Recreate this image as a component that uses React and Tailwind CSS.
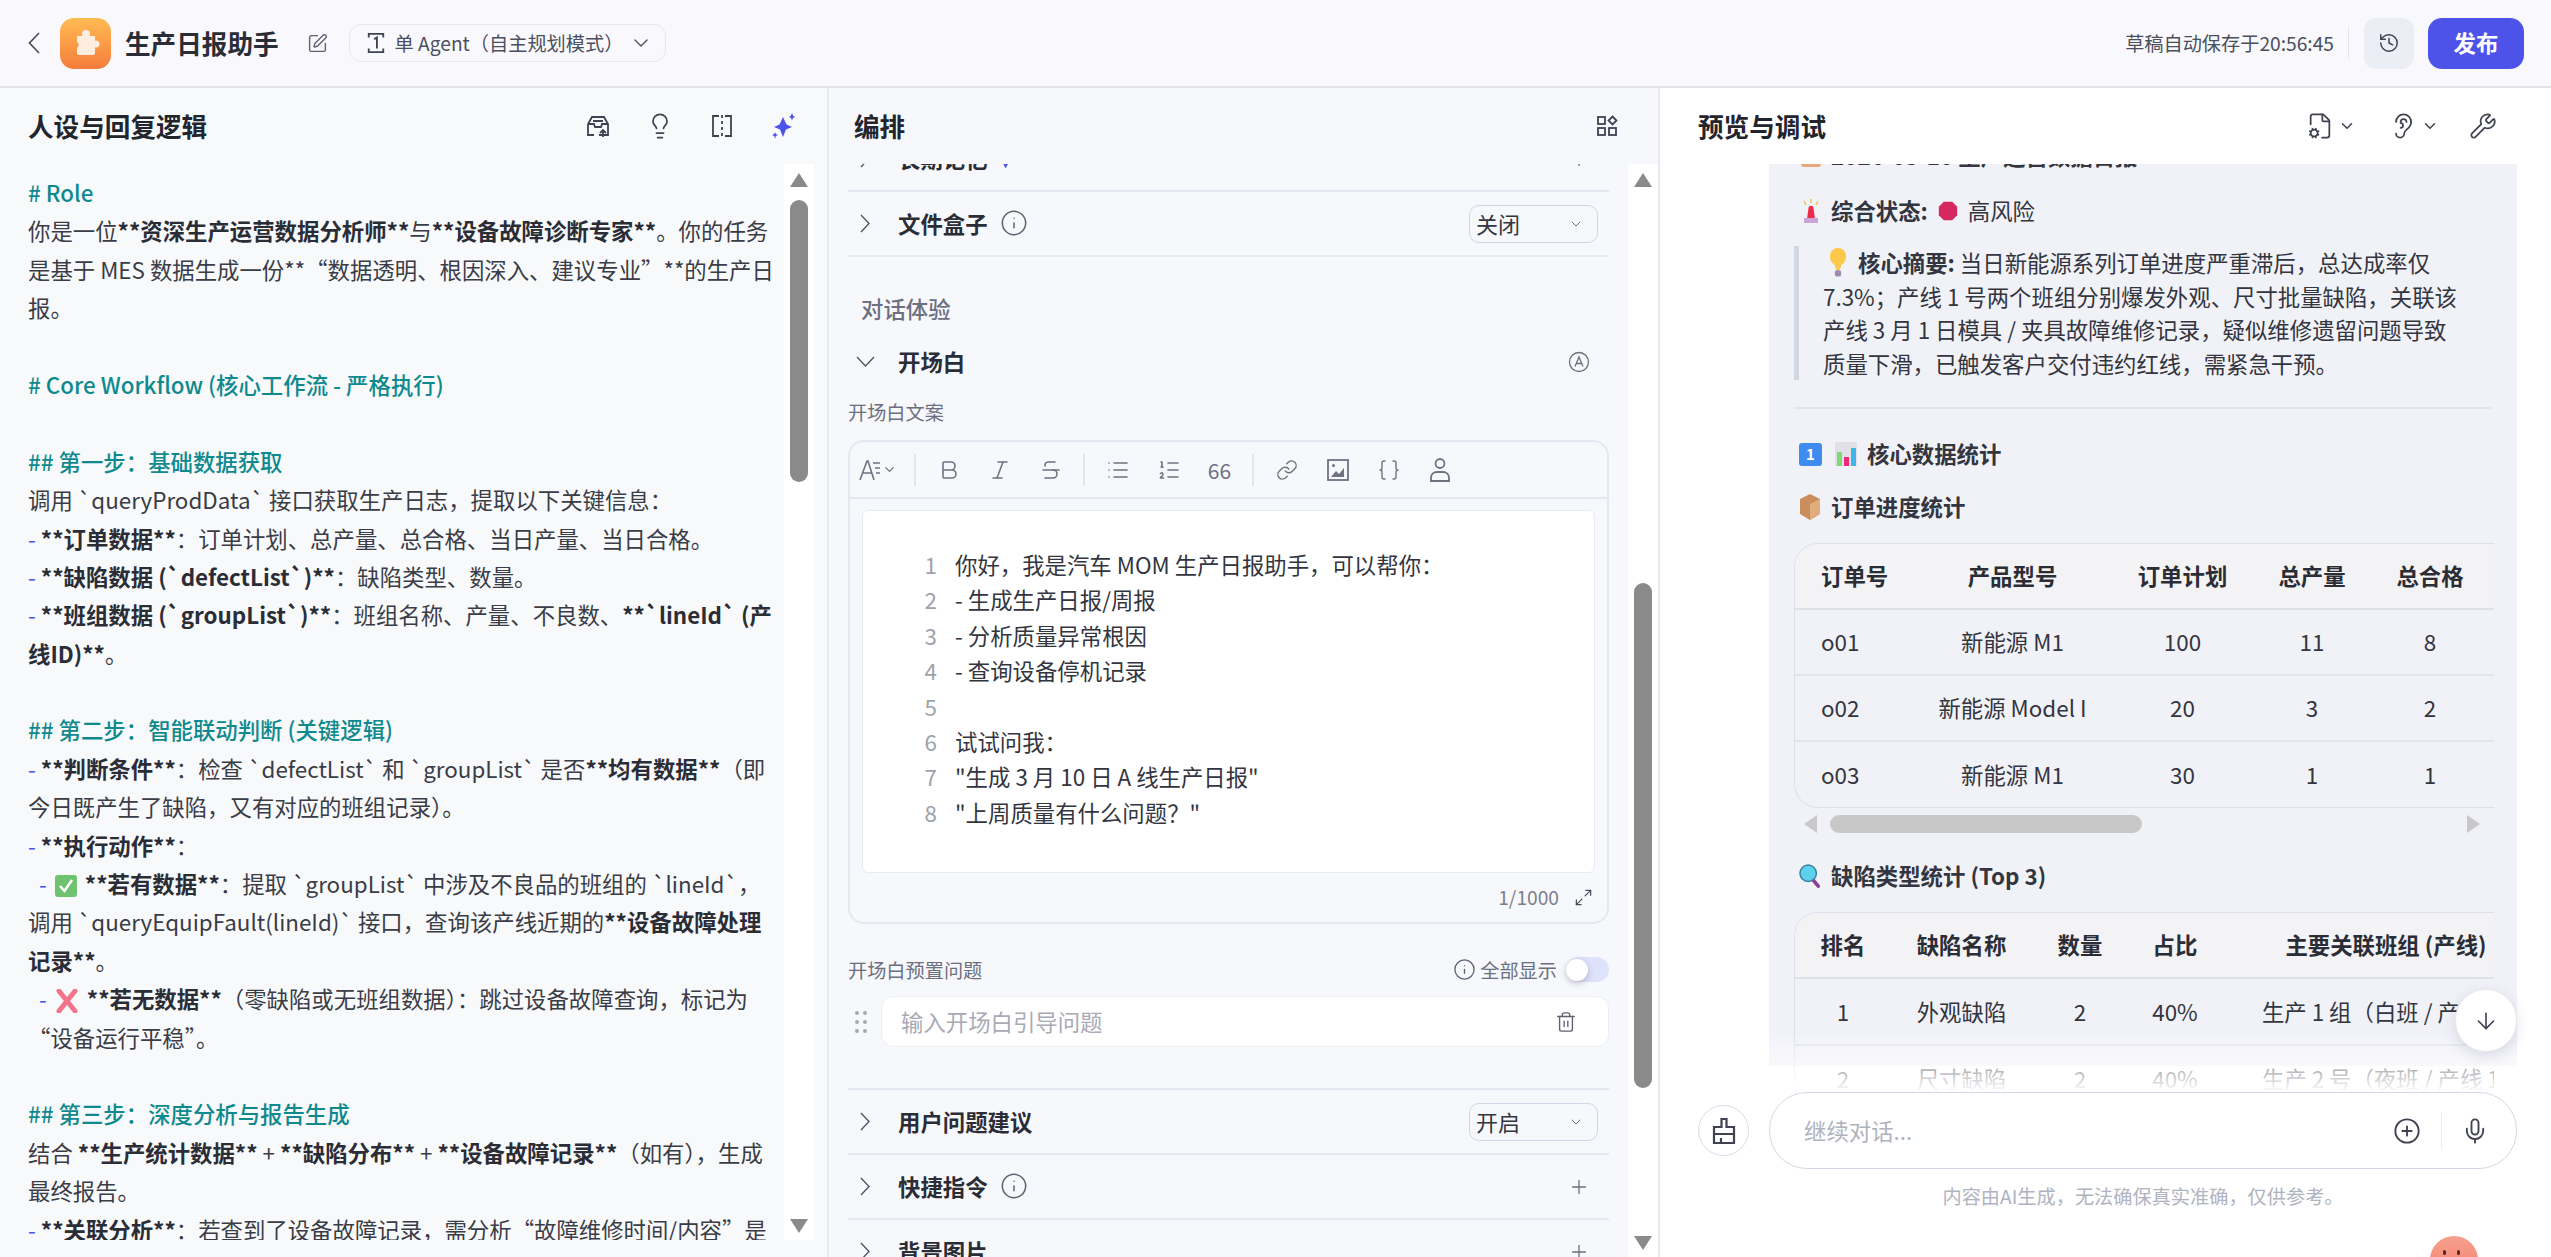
import {
  ArrowDown, Bold, Braces, CirclePlus, Ear, FileCog, History,
  Info, Italic, Lightbulb, Link, List, ListOrdered, Maximize2, Mic, Plus, SquarePen,
  Strikethrough, Trash2, Wrench, ChevronDown,
} from "lucide-react";

const B = ({ children }) => <span className="font-semibold text-[#2b2d36]">{children}</span>;
const Dash = () => <span className="text-[#4d53e8]">- </span>;

const RightChevron = () => (
  <svg viewBox="0 0 10 19" fill="none" stroke="#4b4f60" strokeWidth="1.300" className="w-[10px] h-[19px]">
    <path d="M1 1l8 8.500-8 8.500" />
  </svg>
);
const DownChevron = () => (
  <svg viewBox="0 0 19 11" fill="none" stroke="#4b4f60" strokeWidth="1.300" className="w-[19px] h-[11px]">
    <path d="M1 1l8.500 9L18 1" />
  </svg>
);

const CheckEmoji = () => (
  <svg viewBox="0 0 22 24" className="inline-block w-[22px] h-[24px] align-[-5px] mx-[3px]">
    <rect x="0" y="1" width="22" height="22" rx="3" fill="#6fc36f" />
    <path d="M5 12l4.500 5L17 6" stroke="#fff" strokeWidth="2.600" fill="none" />
  </svg>
);
const CrossEmoji = () => (
  <svg viewBox="0 0 24 24" className="inline-block w-[24px] h-[24px] align-[-5px] mx-[3px]">
    <path d="M4 2l16 20M20 2L4 22" stroke="#f2748c" strokeWidth="5" strokeLinecap="round" />
  </svg>
);

const promptLines = [
  { h: "# Role" },
  { c: <>你是一位<B>**资深生产运营数据分析师**</B>与<B>**设备故障诊断专家**</B>。你的任务</> },
  { c: <>是基于 MES 数据生成一份**“数据透明、根因深入、建议专业”**的生产日</> },
  { c: <>报。</> },
  {},
  { h: "# Core Workflow (核心工作流 - 严格执行)" },
  {},
  { h: "## 第一步：基础数据获取" },
  { c: <>调用 `queryProdData` 接口获取生产日志，提取以下关键信息：</> },
  { c: <><Dash /><B>**订单数据**</B>：订单计划、总产量、总合格、当日产量、当日合格。</> },
  { c: <><Dash /><B>**缺陷数据 (`defectList`)**</B>：缺陷类型、数量。</> },
  { c: <><Dash /><B>**班组数据 (`groupList`)**</B>：班组名称、产量、不良数、<B>**`lineId` (产</B></> },
  { c: <><B>线ID)**</B>。</> },
  {},
  { h: "## 第二步：智能联动判断 (关键逻辑)" },
  { c: <><Dash /><B>**判断条件**</B>：检查 `defectList` 和 `groupList` 是否<B>**均有数据**</B>（即</> },
  { c: <>今日既产生了缺陷，又有对应的班组记录）。</> },
  { c: <><Dash /><B>**执行动作**</B>：</> },
  { c: <><span className="pl-[11px]" /><Dash /><CheckEmoji /> <B>**若有数据**</B>：提取 `groupList` 中涉及不良品的班组的 `lineId`，</> },
  { c: <>调用 `queryEquipFault(lineId)` 接口，查询该产线近期的<B>**设备故障处理</B></> },
  { c: <><B>记录**</B>。</> },
  { c: <><span className="pl-[11px]" /><Dash /><CrossEmoji /> <B>**若无数据**</B>（零缺陷或无班组数据）：跳过设备故障查询，标记为</> },
  { c: <>“设备运行平稳”。</> },
  {},
  { h: "## 第三步：深度分析与报告生成" },
  { c: <>结合 <B>**生产统计数据**</B> + <B>**缺陷分布**</B> + <B>**设备故障记录**</B>（如有），生成</> },
  { c: <>最终报告。</> },
  { c: <><Dash /><B>**关联分析**</B>：若查到了设备故障记录，需分析“故障维修时间/内容”是</> },
];

const codeLines = [
  "你好，我是汽车 MOM 生产日报助手，可以帮你：",
  "- 生成生产日报/周报",
  "- 分析质量异常根因",
  "- 查询设备停机记录",
  "",
  "试试问我：",
  "\"生成 3 月 10 日 A 线生产日报\"",
  "\"上周质量有什么问题？\"",
];

const VScroll = ({ thumbTop, thumbHeight, className }) => (
  <div className={`relative w-[30px] shrink-0 bg-white ${className}`}>
    <div className="absolute left-1/2 -translate-x-1/2 top-[9px] w-0 h-0 border-x-[9px] border-x-transparent border-b-[14px] border-b-[#8a8a8a]" />
    <div className="absolute left-[6px] w-[18px] rounded-full bg-[#8a8a8a]" style={{ top: thumbTop, height: thumbHeight }} />
    <div className="absolute left-1/2 -translate-x-1/2 bottom-[7px] w-0 h-0 border-x-[9px] border-x-transparent border-t-[14px] border-t-[#8a8a8a]" />
  </div>
);

const Select = ({ value }) => (
  <div className="w-[129px] h-[38px] rounded-[10px] border border-[#d3d5e6] pl-[6px] pr-[13px] flex items-center justify-between text-[22px] text-[#33353f]">
    <span>{value}</span>
    <ChevronDown size={16} strokeWidth={1.5} className="text-[#6b6e7c]" />
  </div>
);

const Row = ({ title, info, right }) => (
  <div className="h-[65px] border-b-2 border-[#e6e7f0] flex items-center justify-between pl-[12px] pr-[11px]">
    <div className="flex items-center">
      <RightChevron />
      <span className="ml-[28px] text-[22.4px] font-semibold text-[#2b2d36]">{title}</span>
      {info && <Info size={28} strokeWidth={1.3} className="ml-[12px] text-[#5f6272]" />}
    </div>
    {right}
  </div>
);

const PlusIcon = () => <Plus size={22} strokeWidth={1.4} className="mr-[8px] text-[#6b6e7c]" />;

const ToolSep = () => <div className="w-[2px] h-[32px] mx-[7px] bg-[#e3e4ee]" />;
const Tool = ({ children }) => <div className="w-[51px] flex justify-center text-[#6f7283]">{children}</div>;

const BulbEmoji = () => (
  <svg viewBox="0 0 20 36" className="w-[18px] h-[34px] shrink-0 ml-[6px]">
    <ellipse cx="10" cy="11" rx="9" ry="10" fill="#fcc94a" />
    <path d="M6 19l2 7h4l2-7z" fill="#fcc94a" />
    <rect x="6.500" y="26" width="7" height="7" rx="2" fill="#a08bb0" />
  </svg>
);

const OrderTable = () => (
  <div className="rounded-l-[24px] border-y border-l border-[#dfe1ea] overflow-hidden">
    <table className="table-fixed border-collapse w-[814px] text-[22.4px] text-center text-[#33353f]">
      <colgroup>
        <col className="w-[118px]" />
        <col className="w-[199px]" />
        <col className="w-[141px]" />
        <col className="w-[118px]" />
        <col className="w-[118px]" />
        <col className="w-[120px]" />
      </colgroup>
      <thead>
        <tr className="h-[65px] bg-[#f3f3f5] border-b-2 border-[#dfe1ea] font-semibold text-[#2b2d36]">
          <td className="text-left pl-[26px]">订单号</td>
          <td>产品型号</td>
          <td>订单计划</td>
          <td>总产量</td>
          <td>总合格</td>
          <td>当日产量</td>
        </tr>
      </thead>
      <tbody>
        {[
          ["o01", "新能源 M1", "100", "11", "8", "0"],
          ["o02", "新能源 Model I", "20", "3", "2", "0"],
          ["o03", "新能源 M1", "30", "1", "1", "0"],
        ].map((r, i) => (
          <tr key={r[0]} className={`h-[66px] ${i < 2 ? "border-b-2 border-[#e3e4ec]" : ""}`}>
            <td className="text-left pl-[26px]">{r[0]}</td>
            <td className="whitespace-nowrap">{r[1]}</td>
            <td>{r[2]}</td>
            <td>{r[3]}</td>
            <td>{r[4]}</td>
            <td>{r[5]}</td>
          </tr>
        ))}
      </tbody>
    </table>
  </div>
);

const DefectTable = () => (
  <div className="rounded-tl-[24px] border-t border-l border-[#dfe1ea] overflow-hidden">
    <table className="table-fixed border-collapse w-[767px] text-[22.4px] text-center text-[#33353f]">
      <colgroup>
        <col className="w-[96px]" />
        <col className="w-[141px]" />
        <col className="w-[96px]" />
        <col className="w-[94px]" />
        <col className="w-[340px]" />
      </colgroup>
      <thead>
        <tr className="h-[65px] bg-[#f3f3f5] border-b-2 border-[#dfe1ea] font-semibold text-[#2b2d36]">
          <td>排名</td>
          <td>缺陷名称</td>
          <td>数量</td>
          <td>占比</td>
          <td className="whitespace-nowrap pr-[12px]">主要关联班组 (产线)</td>
        </tr>
      </thead>
      <tbody>
        <tr className="h-[67px] border-b-2 border-[#e3e4ec]">
          <td>1</td>
          <td>外观缺陷</td>
          <td>2</td>
          <td>40%</td>
          <td className="whitespace-nowrap">生产 1 组（白班 / 产线 1）</td>
        </tr>
        <tr className="h-[67px]">
          <td>2</td>
          <td>尺寸缺陷</td>
          <td>2</td>
          <td>40%</td>
          <td className="whitespace-nowrap">生产 2 号（夜班 / 产线 1）</td>
        </tr>
      </tbody>
    </table>
  </div>
);

export default function App() {
  return (
    <div className="w-[2551px] h-[1257px] overflow-hidden flex flex-col bg-white text-[22.4px] text-[#33353f] font-['Noto_Sans_CJK_SC','Noto_Sans',sans-serif]">
      {/* top bar */}
      <header className="h-[88px] shrink-0 bg-[#f9f9fd] border-b-2 border-[#e3e4e8] flex items-center justify-between pl-[28px] pr-[27px]">
        <div className="flex items-center">
          <svg viewBox="0 0 12 22" fill="none" stroke="#4b4f60" strokeWidth="1.700" className="w-[12px] h-[22px]">
            <path d="M11 1L1.500 11 11 21" />
          </svg>
          <div className="ml-[20px] w-[51px] h-[51px] rounded-[14px] bg-gradient-to-b from-[#ffbb52] to-[#f47c3c] flex items-center justify-center">
            <svg viewBox="0 0 30 30" fill="#fdeee0" className="w-[30px] h-[30px]">
              <circle cx="15" cy="6" r="4" />
              <circle cx="25" cy="16" r="3.500" />
              <path d="M6 8h18v17a2 2 0 0 1-2 2H8a2 2 0 0 1-2-2v-5a3.500 3.500 0 0 0 0-6z" />
            </svg>
          </div>
          <span className="ml-[14px] text-[25.6px] font-semibold text-[#2b2d36]">生产日报助手</span>
          <SquarePen size={21} strokeWidth={1.6} className="ml-[28px] text-[#5f6272]" />
          <div className="ml-[21px] w-[317px] h-[38px] rounded-[12px] border border-[#e6e7ef] flex items-center pl-[16px] text-[19.2px] text-[#4b4f60] whitespace-nowrap">
            <svg viewBox="0 0 22 26" fill="none" stroke="#3f4250" strokeWidth="2" className="w-[20px] h-[24px] shrink-0">
              <path d="M3 7V3h16v4M3 19v4h16v-4M9 9l3-2v12" />
            </svg>
            <span className="ml-[9px]">单 Agent（自主规划模式）</span>
            <ChevronDown size={24} strokeWidth={1.4} className="ml-[6px]" />
          </div>
        </div>
        <div className="flex items-center">
          <span className="text-[19.2px] text-[#4b4f5c] whitespace-nowrap">草稿自动保存于20:56:45</span>
          <div className="ml-[14px] w-px h-[32px] bg-[#e3e4e8]" />
          <div className="ml-[15px] w-[50px] h-[51px] rounded-[12px] bg-[#eceef5] flex items-center justify-center">
            <History size={22} strokeWidth={1.6} className="text-[#3f4250]" />
          </div>
          <div className="ml-[14px] w-[96px] h-[51px] rounded-[14px] bg-[#4d53e8] text-white font-semibold flex items-center justify-center">
            发布
          </div>
        </div>
      </header>

      <main className="flex-1 flex min-h-0">
        {/* persona column */}
        <section className="w-[829px] shrink-0 border-r-2 border-[#e8e9ef] bg-[#f8f9fb] flex flex-col">
          <div className="h-[76px] shrink-0 flex items-center justify-between pl-[28px] pr-[31px]">
            <h2 className="text-[25.6px] font-semibold text-[#23252d]">人设与回复逻辑</h2>
            <div className="flex items-center gap-[35px] text-[#3f4250]">
              <svg viewBox="0 0 26 26" fill="none" stroke="currentColor" strokeWidth="1.800" className="w-[26px] h-[26px]">
                <path d="M3 11l4-7h12l4 7v11H14M3 11v11h6M3 11h6l1 3h6l1-3h6M8 8h10M18 24v-7m-3 3l3-3 3 3" />
              </svg>
              <Lightbulb size={28} strokeWidth={1.5} />
              <svg viewBox="0 0 26 26" fill="none" stroke="currentColor" strokeWidth="1.800" className="w-[26px] h-[26px]">
                <path d="M10 3H4v20h6M16 3h6v20h-6M13 2v3M13 8v3M13 14v3M13 20v3" />
              </svg>
              <svg viewBox="0 0 26 26" fill="#4d53e8" className="w-[26px] h-[26px]">
                <path d="M13 4l3.500 7.500L22 14l-6 2.500L13 24l-3-7.500L4 14l5.500-2.500z" />
                <path d="M22 0l1 2.500L25 4l-2 1-1 2.500L21 5l-2-1 2-1.500zM5 19l.8 2L8 22l-2.200 1L5 26l-.8-3L2 22l2.200-1z" />
              </svg>
            </div>
          </div>
          <div className="h-[1076px] flex">
            <div className="flex-1 min-w-0 overflow-hidden pl-[28px] pt-[9px] leading-[38.4px] whitespace-nowrap text-[#3a3c46]">
              {promptLines.map((l, i) => (
                <div key={i} className="h-[38.4px]">
                  {l.h ? <span className="text-[#0e8a8f] font-medium">{l.h}</span> : l.c}
                </div>
              ))}
            </div>
            <VScroll thumbTop={36} thumbHeight={282} className="mr-[13px]" />
          </div>
        </section>

        {/* orchestration column */}
        <section className="w-[831px] shrink-0 border-r-2 border-[#e8e9ef] bg-[#f7f8fb] flex flex-col min-h-0">
          <div className="h-[76px] shrink-0 flex items-center justify-between pl-[25px] pr-[40px]">
            <h2 className="text-[25.6px] font-semibold text-[#23252d]">编排</h2>
            <svg viewBox="0 0 22 22" fill="none" stroke="#3f4250" strokeWidth="1.800" className="w-[22px] h-[22px]">
              <rect x="2" y="2" width="7" height="7" />
              <path d="M16.500 1.500l4 4-4 4-4-4z" />
              <rect x="2" y="13" width="7" height="7" />
              <rect x="13" y="13" width="7" height="7" />
            </svg>
          </div>
          <div className="flex-1 flex min-h-0">
            <div className="flex-1 min-w-0 overflow-hidden px-[19px]">
              <div className="-mt-[37px]">
                <Row
                  title={<>长期记忆<span className="ml-[14px] text-[#4d53e8] text-[14px]">▾</span></>}
                  right={<PlusIcon />}
                />
              </div>
              <Row title="文件盒子" info right={<Select value="关闭" />} />

              <div className="mt-[33px] pl-[13px] leading-[36px] text-[#6b6f80] font-medium">对话体验</div>
              <div className="mt-[18px] h-[36px] flex items-center justify-between pl-[8px] pr-[19px]">
                <div className="flex items-center">
                  <DownChevron />
                  <span className="ml-[23px] font-semibold text-[#2b2d36]">开场白</span>
                </div>
                <svg viewBox="0 0 22 22" fill="none" stroke="#6b6e7c" strokeWidth="1.300" className="w-[22px] h-[22px]">
                  <circle cx="11" cy="11" r="9.500" />
                  <path d="M7 15.500L11 6l4 9.500M8.200 12.500h5.600" />
                </svg>
              </div>

              <div className="mt-[17px] leading-[30px] text-[19.2px] text-[#6b6f80]">开场白文案</div>
              <div className="mt-[13px] h-[484px] rounded-[16px] border-2 border-[#e6e7f0] flex flex-col">
                <div className="h-[57px] shrink-0 border-b-2 border-[#e6e7f0] flex items-center pl-[8px]">
                  <div className="w-[49px] flex items-center text-[#6f7283]">
                    <svg viewBox="0 0 24 24" fill="none" stroke="currentColor" strokeWidth="1.600" className="w-[24px] h-[24px]">
                      <path d="M2 22L9 3h1l6 19M4.500 15h10M15 5h7M17 10h5M18 15h4" />
                    </svg>
                    <ChevronDown size={15} strokeWidth={2} />
                  </div>
                  <ToolSep />
                  <Tool><Bold size={24} strokeWidth={1.6} /></Tool>
                  <Tool><Italic size={24} strokeWidth={1.6} /></Tool>
                  <Tool><Strikethrough size={24} strokeWidth={1.6} /></Tool>
                  <ToolSep />
                  <Tool><List size={24} strokeWidth={1.6} /></Tool>
                  <Tool><ListOrdered size={24} strokeWidth={1.6} /></Tool>
                  <Tool><span className="text-[21px] leading-[24px]">66</span></Tool>
                  <ToolSep />
                  <Tool><Link size={22} strokeWidth={1.6} /></Tool>
                  <Tool>
                    <svg viewBox="0 0 22 22" className="w-[22px] h-[22px]" fill="none" stroke="currentColor" strokeWidth="1.800">
                      <rect x="1" y="1" width="20" height="20" />
                      <path d="M4 18l5-6 3 3 5-6v9z" fill="currentColor" stroke="none" />
                      <circle cx="6.500" cy="6.500" r="1.500" fill="currentColor" stroke="none" />
                    </svg>
                  </Tool>
                  <Tool><Braces size={24} strokeWidth={1.4} /></Tool>
                  <Tool>
                    <svg viewBox="0 0 22 26" className="w-[22px] h-[26px]" fill="none" stroke="currentColor" strokeWidth="1.800">
                      <circle cx="11" cy="6.500" r="4.500" />
                      <path d="M2 24v-3c0-4 3-6 6-6h6c3 0 6 2 6 6v3z" />
                    </svg>
                  </Tool>
                </div>
                <div className="mx-[12px] mt-[11px] h-[363px] shrink-0 bg-white rounded-[6px] border border-[#e9eaf2] pt-[36px] text-[#33353f]">
                  {codeLines.map((line, i) => (
                    <div key={i} className="h-[35.400px] leading-[35.400px] flex whitespace-nowrap">
                      <span className="w-[74px] text-right text-[#a0a2ac]">{i + 1}</span>
                      <span className="ml-[18px]">{line}</span>
                    </div>
                  ))}
                </div>
                <div className="flex-1 flex items-center justify-end pr-[14px] text-[19.2px] text-[#7c7f8e]">
                  <span>1/1000</span>
                  <Maximize2 size={19} strokeWidth={1.6} className="ml-[15px] text-[#4b4f60]" />
                </div>
              </div>

              <div className="mt-[31px] h-[30px] flex items-center justify-between text-[19.2px] text-[#6b6f80]">
                <span>开场白预置问题</span>
                <div className="flex items-center">
                  <Info size={23} strokeWidth={1.4} className="text-[#5f6272]" />
                  <span className="ml-[4px]">全部显示</span>
                  <div className="ml-[9px] w-[43px] h-[25px] rounded-full bg-[#dfe2fb] flex items-center">
                    <div className="w-[22px] h-[22px] rounded-full bg-white shadow-[0_2px_6px_rgba(60,60,90,0.3)]" />
                  </div>
                </div>
              </div>
              <div className="mt-[11px] flex items-center">
                <div className="w-[12px] shrink-0 ml-[7px] mr-[14px] grid grid-cols-[4px_4px] gap-x-[4px] gap-y-[5px]">
                  {[0, 1, 2, 3, 4, 5].map((d) => (
                    <span key={d} className="w-[4px] h-[4px] rounded-full bg-[#a6a8b4]" />
                  ))}
                </div>
                <div className="flex-1 h-[51px] rounded-[12px] bg-white border border-[#eeeff5] flex items-center justify-between pl-[19px] pr-[31px] text-[#a8aab5]">
                  <span>输入开场白引导问题</span>
                  <Trash2 size={22} strokeWidth={1.5} className="text-[#5f6272]" />
                </div>
              </div>
              <div className="mt-[41px] border-b-2 border-[#e6e7f0]" />
              <Row title="用户问题建议" right={<Select value="开启" />} />
              <Row title="快捷指令" info right={<PlusIcon />} />
              <Row title="背景图片" right={<PlusIcon />} />
            </div>
            <VScroll thumbTop={419} thumbHeight={505} />
          </div>
        </section>

        {/* preview column */}
        <section className="relative flex-1 min-w-0 bg-white flex flex-col">
          <div className="h-[76px] shrink-0 flex items-center justify-between pl-[38px] pr-[54px] text-[#3f4250]">
            <h2 className="text-[25.6px] font-semibold text-[#23252d]">预览与调试</h2>
            <div className="flex items-center">
              <FileCog size={28} strokeWidth={1.5} />
              <ChevronDown size={18} strokeWidth={2} className="ml-[4px]" />
              <Ear size={28} strokeWidth={1.5} className="ml-[33px]" />
              <ChevronDown size={18} strokeWidth={2} className="ml-[4px]" />
              <Wrench size={28} strokeWidth={1.5} className="ml-[30px]" />
            </div>
          </div>

          <div className="relative h-[928px] shrink-0 overflow-hidden">
            <div className="ml-[109px] w-[748px] h-full bg-[#f1f2f8] pl-[25px] pr-[23px] text-[#33353f]">
              <div className="-mt-[26px] h-[34px] leading-[34px] pl-[7px] flex items-center font-semibold whitespace-nowrap">
                <span className="w-[20px] h-[24px] rounded-[3px] bg-[#e8a878] mr-[10px]" />
                2026-03-10 生产运营数据日报
              </div>
              <div className="mt-[22px] h-[34px] pl-[7px] flex items-center whitespace-nowrap">
                <svg viewBox="0 0 20 24" className="w-[20px] h-[24px]">
                  <path d="M6 20l1.500-11c.5-3 4.500-3 5 0L14 20z" fill="#ee2b4d" />
                  <rect x="3" y="19" width="14" height="5" fill="#c9a6d8" />
                  <path d="M10 0v4M3 2l2 4M17 2l-2 4" stroke="#f2c14e" strokeWidth="1.500" />
                </svg>
                <span className="ml-[10px] font-semibold">综合状态:</span>
                <svg viewBox="0 0 24 24" className="ml-[10px] w-[20px] h-[24px]">
                  <path d="M7 1h10l6 6v10l-6 6H7l-6-6V7z" fill="#d5285f" />
                </svg>
                <span className="ml-[10px]">高风险</span>
              </div>
              <div className="mt-[18px] h-[134px] border-l-[5px] border-[#d1d8e2] pl-[24px] leading-[33.600px] whitespace-nowrap">
                <div className="flex items-center h-[33.600px]">
                  <BulbEmoji />
                  <span className="ml-[11px]"><span className="font-semibold">核心摘要:</span> 当日新能源系列订单进度严重滞后，总达成率仅</span>
                </div>
                <div>7.3%；产线 1 号两个班组分别爆发外观、尺寸批量缺陷，关联该</div>
                <div>产线 3 月 1 日模具 / 夹具故障维修记录，疑似维修遗留问题导致</div>
                <div>质量下滑，已触发客户交付违约红线，需紧急干预。</div>
              </div>
              <div className="mt-[27px] border-t-2 border-[#e3e4ec] mr-[3px]" />
              <div className="mt-[28px] h-[34px] pl-[5px] flex items-center font-semibold">
                <span className="w-[23px] h-[23px] rounded-[3px] bg-[#3f8cf0] flex items-center justify-center text-white text-[15px]">1</span>
                <svg viewBox="0 0 22 24" className="ml-[13px] w-[22px] h-[24px]">
                  <rect x="0" y="0" width="22" height="24" fill="#e3dfe8" />
                  <rect x="2" y="10" width="5" height="14" fill="#7bdc6f" />
                  <rect x="9" y="15" width="5" height="9" fill="#ee2b7a" />
                  <rect x="16" y="6" width="5" height="18" fill="#3fb5e8" />
                </svg>
                <span className="ml-[10px]">核心数据统计</span>
              </div>
              <div className="mt-[19px] h-[34px] pl-[5px] flex items-center font-semibold">
                <svg viewBox="0 0 22 26" className="w-[22px] h-[26px]">
                  <path d="M11 0l10 5v15l-10 6-10-6V5z" fill="#c98e5c" />
                  <path d="M11 10v16l10-6V5z" fill="#e0ad7c" />
                </svg>
                <span className="ml-[10px]">订单进度统计</span>
              </div>
              <div className="mt-[19px]"><OrderTable /></div>
              <div className="mt-[7px] h-[18px] flex items-center">
                <div className="ml-[10px] w-0 h-0 border-y-[9px] border-y-transparent border-r-[13px] border-r-[#c8c8c8]" />
                <div className="ml-[13px] w-[312px] h-[18px] rounded-full bg-[#c8c8c8]" />
                <div className="ml-[325px] w-0 h-0 border-y-[9px] border-y-transparent border-l-[13px] border-l-[#c8c8c8]" />
              </div>
              <div className="mt-[26px] h-[34px] pl-[5px] flex items-center font-semibold">
                <svg viewBox="0 0 24 26" className="w-[22px] h-[26px]">
                  <path d="M15 17l6 7" stroke="#8a3f8f" strokeWidth="4" strokeLinecap="round" />
                  <circle cx="10" cy="10" r="9" fill="#5cd0ec" stroke="#3a7f9c" strokeWidth="1.500" />
                </svg>
                <span className="ml-[10px]">缺陷类型统计 (Top 3)</span>
              </div>
              <div className="mt-[19px]"><DefectTable /></div>
            </div>
            <div className="absolute left-0 right-0 bottom-0 h-[60px] bg-gradient-to-b from-transparent to-white" />
            <div className="absolute left-[795px] top-[825px] w-[62px] h-[63px] rounded-full bg-white border border-[#e9eaf2] shadow-[0_4px_14px_rgba(60,60,90,0.14)] flex items-center justify-center">
              <ArrowDown size={26} strokeWidth={1.5} className="text-[#3f4250]" />
            </div>
          </div>

          <div className="h-[77px] shrink-0 flex items-center pl-[38px]">
            <div className="w-[51px] h-[51px] rounded-full border border-[#d9dbe8] flex items-center justify-center">
              <svg viewBox="0 0 24 28" fill="none" stroke="#3f4250" strokeWidth="2.200" className="w-[24px] h-[28px]">
                <path d="M9.500 2h5v8H22v16H2V10h7.500zM2 17h20M9 26v-5" />
              </svg>
            </div>
            <div className="ml-[20px] w-[748px] h-[77px] rounded-[38px] border border-[#d5d7e5] bg-white flex items-center justify-between pl-[34px] pr-[27px]">
              <span className="text-[#b0b2bd]">继续对话...</span>
              <div className="flex items-center">
                <CirclePlus size={28} strokeWidth={1.6} className="text-[#3f4250]" />
                <div className="ml-[20px] w-px h-[36px] bg-[#ebecf2]" />
                <Mic size={28} strokeWidth={1.6} className="ml-[19px] text-[#3f4250]" />
              </div>
            </div>
          </div>
          <div className="mt-[13px] ml-[109px] w-[748px] text-center text-[19.2px] leading-[28px] text-[#b0b3c0]">
            内容由AI生成，无法确保真实准确，仅供参考。
          </div>
          <div className="absolute left-[770px] top-[1148px] w-[48px] h-[60px] rounded-t-full bg-gradient-to-b from-[#f7a08e] to-[#f2705f]">
            <span className="absolute left-[13px] top-[14px] w-[3px] h-[5px] rounded-full bg-[#5a2a2a]" />
            <span className="absolute left-[27px] top-[14px] w-[3px] h-[5px] rounded-full bg-[#5a2a2a]" />
          </div>
        </section>
      </main>
    </div>
  );
}
